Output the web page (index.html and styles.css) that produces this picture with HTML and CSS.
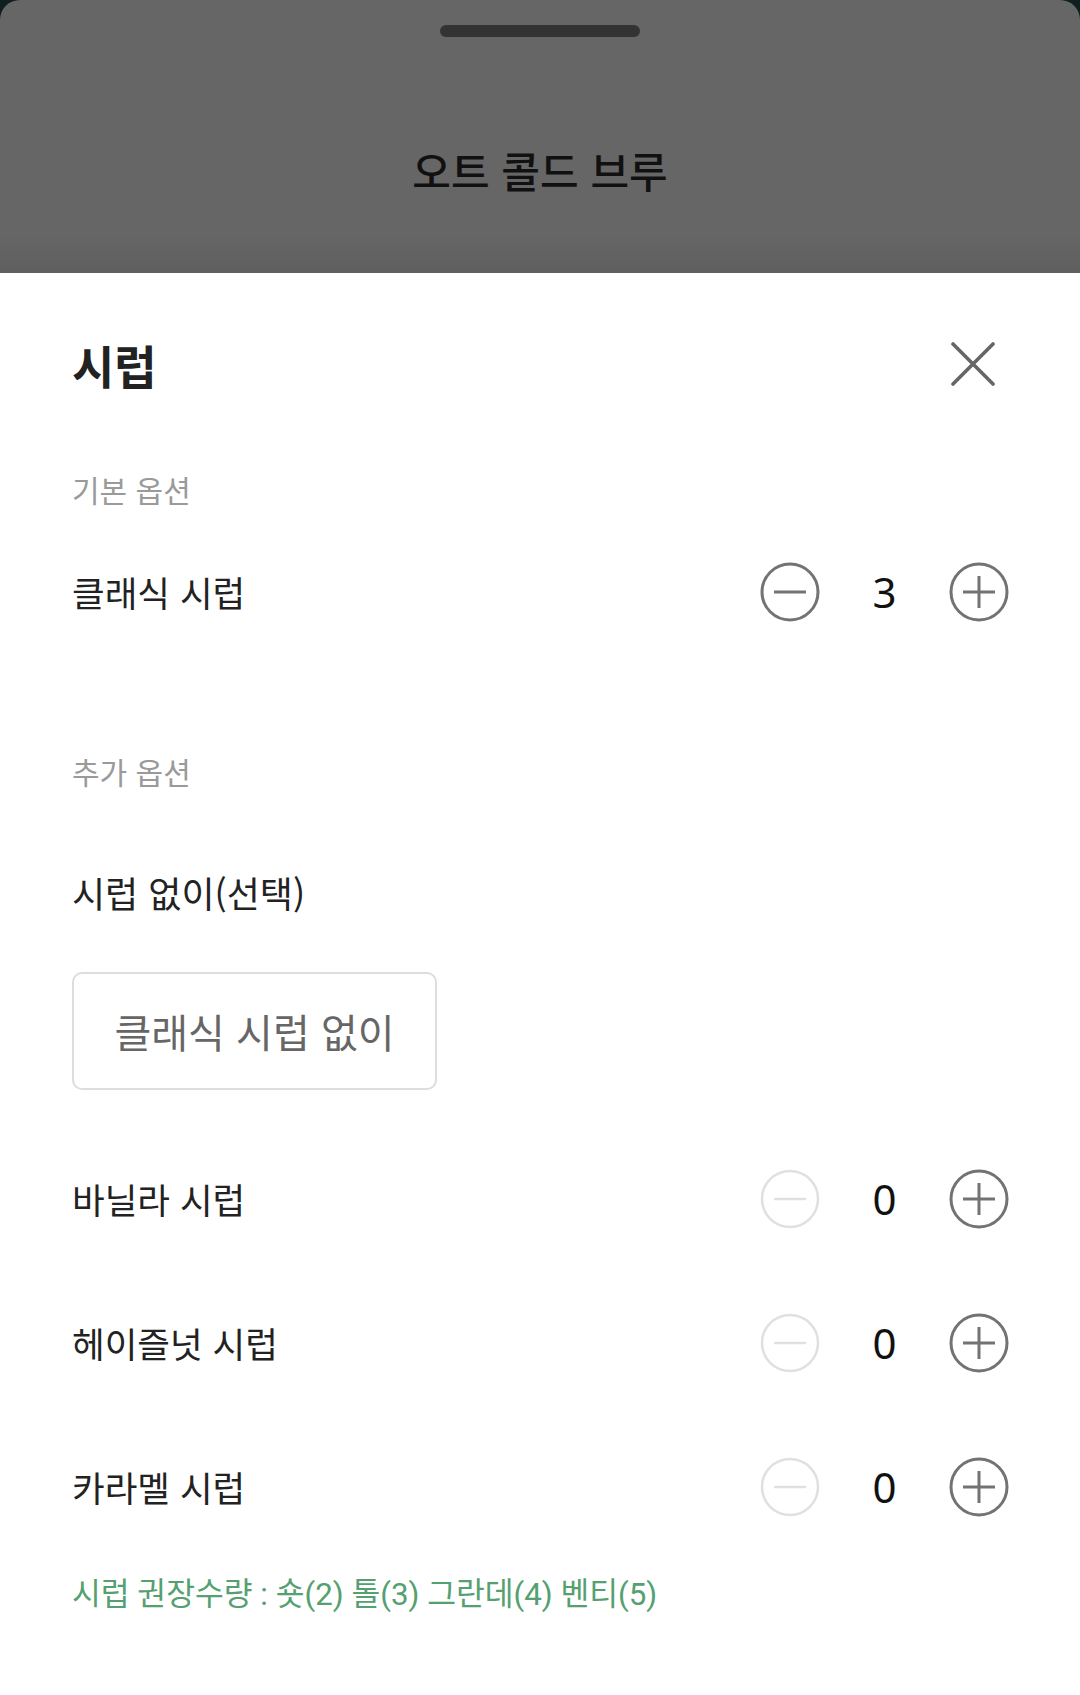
FILE: index.html
```html
<!DOCTYPE html>
<html lang="ko">
<head>
<meta charset="utf-8">
<link rel="stylesheet" href="styles.css">
</head>
<body>
<div class="page">
  <div class="dim">
    <div class="handle"></div>
    <div class="dim-title">오트 콜드 브루</div>
  </div>
  <div class="sheet">
    <div class="header">
      <div class="title">시럽</div>
      <svg class="close" width="44" height="44" viewBox="0 0 44 44"><path d="M2 2 L42 42 M42 2 L2 42" stroke="#666" stroke-width="3.6" stroke-linecap="round" fill="none"/></svg>
    </div>
    <div class="section-label">기본 옵션</div>
    <div class="row row-first">
      <div class="label">클래식 시럽</div>
      <div class="stepper">
        <svg class="btn" width="60" height="60" viewBox="0 0 60 60"><circle cx="30" cy="30" r="28" stroke="#737373" stroke-width="3" fill="none"/><path d="M14 30 H46" stroke="#737373" stroke-width="3"/></svg>
        <div class="count">3</div>
        <svg class="btn" width="60" height="60" viewBox="0 0 60 60"><circle cx="30" cy="30" r="28" stroke="#737373" stroke-width="3" fill="none"/><path d="M14 30 H46 M30 14 V46" stroke="#737373" stroke-width="3"/></svg>
      </div>
    </div>
    <div class="section-label section-extra">추가 옵션</div>
    <div class="group-title">시럽 없이(선택)</div>
    <div class="chip">클래식 시럽 없이</div>
    <div class="rows">
      <div class="row">
        <div class="label">바닐라 시럽</div>
        <div class="stepper">
          <svg class="btn" width="60" height="60" viewBox="0 0 60 60"><circle cx="30" cy="30" r="28" stroke="#e0e0e0" stroke-width="2.5" fill="none"/><path d="M14 30 H46" stroke="#e0e0e0" stroke-width="2.5"/></svg>
          <div class="count">0</div>
          <svg class="btn" width="60" height="60" viewBox="0 0 60 60"><circle cx="30" cy="30" r="28" stroke="#737373" stroke-width="3" fill="none"/><path d="M14 30 H46 M30 14 V46" stroke="#737373" stroke-width="3"/></svg>
        </div>
      </div>
      <div class="row">
        <div class="label">헤이즐넛 시럽</div>
        <div class="stepper">
          <svg class="btn" width="60" height="60" viewBox="0 0 60 60"><circle cx="30" cy="30" r="28" stroke="#e0e0e0" stroke-width="2.5" fill="none"/><path d="M14 30 H46" stroke="#e0e0e0" stroke-width="2.5"/></svg>
          <div class="count">0</div>
          <svg class="btn" width="60" height="60" viewBox="0 0 60 60"><circle cx="30" cy="30" r="28" stroke="#737373" stroke-width="3" fill="none"/><path d="M14 30 H46 M30 14 V46" stroke="#737373" stroke-width="3"/></svg>
        </div>
      </div>
      <div class="row">
        <div class="label">카라멜 시럽</div>
        <div class="stepper">
          <svg class="btn" width="60" height="60" viewBox="0 0 60 60"><circle cx="30" cy="30" r="28" stroke="#e0e0e0" stroke-width="2.5" fill="none"/><path d="M14 30 H46" stroke="#e0e0e0" stroke-width="2.5"/></svg>
          <div class="count">0</div>
          <svg class="btn" width="60" height="60" viewBox="0 0 60 60"><circle cx="30" cy="30" r="28" stroke="#737373" stroke-width="3" fill="none"/><path d="M14 30 H46 M30 14 V46" stroke="#737373" stroke-width="3"/></svg>
        </div>
      </div>
    </div>
    <div class="note">시럽 권장수량 : 숏(2) 톨(3) 그란데(4) 벤티(5)</div>
  </div>
</div>
</body>
</html>
```

FILE: styles.css
```css
html, body {
  margin: 0;
  padding: 0;
  background: #ffffff;
}
body {
  font-family: "Noto Sans CJK KR", "Noto Sans", sans-serif;
  color: #222;
}
.page {
  width: 1080px;
  height: 1695px;
  overflow: hidden;
  background: linear-gradient(to bottom, #0f1f1f 0, #0f1f1f 30px, #ffffff 30px);
}
.dim {
  height: 273px;
  background: linear-gradient(to bottom, #666666 0%, #666666 85%, #5f5f5f 100%);
  border-radius: 20px 20px 0 0;
  display: flex;
  flex-direction: column;
  align-items: center;
}
.handle {
  margin-top: 25px;
  width: 200px;
  height: 12px;
  border-radius: 6px;
  background: #333333;
}
.dim-title {
  margin-top: 106px;
  font-size: 42px;
  line-height: 54px;
  font-weight: 500;
  color: #111111;
}
.sheet {
  background: #ffffff;
  padding: 0 72px;
}
.header {
  height: 182px;
  display: flex;
  align-items: center;
  justify-content: space-between;
}
.title {
  font-size: 46px;
  font-weight: 700;
  line-height: 54px;
  color: #222;
}
.close {
  margin-right: 13px;
  display: block;
}
.section-label {
  height: 68px;
  display: flex;
  align-items: center;
  font-size: 30px;
  color: #9a9a9a;
}
.section-extra {
  margin-top: 76px;
}
.row {
  height: 144px;
  display: flex;
  align-items: center;
  justify-content: space-between;
}
.row-first {
  height: 138px;
}
.label {
  font-size: 35.5px;
  line-height: 48px;
  color: #222;
}
.stepper {
  display: flex;
  align-items: center;
  margin-right: -1px;
}
.btn {
  display: block;
}
.count {
  width: 129px;
  text-align: center;
  font-family: "Noto Sans", sans-serif;
  font-size: 42px;
  line-height: 50px;
  color: #111;
}
.group-title {
  margin-top: 63px;
  font-size: 36px;
  line-height: 48px;
  color: #222;
}
.chip {
  margin-top: 56px;
  width: 361px;
  height: 114px;
  border: 2px solid #dddddd;
  border-radius: 10px;
  display: flex;
  align-items: center;
  justify-content: center;
  font-size: 40px;
  color: #666666;
}
.rows {
  margin-top: 37px;
}
.note {
  margin-top: 16px;
  font-family: "Roboto", "Noto Sans CJK KR", sans-serif;
  font-size: 31.3px;
  line-height: 40px;
  color: #55a070;
}
```
